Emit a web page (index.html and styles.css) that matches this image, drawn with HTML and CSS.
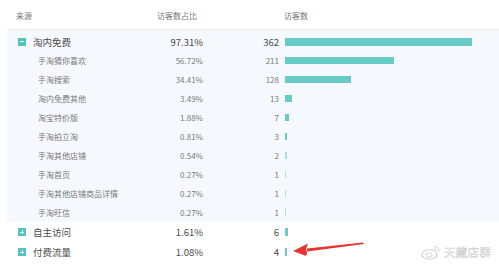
FILE: index.html
```html
<!DOCTYPE html>
<html lang="zh">
<head>
<meta charset="utf-8">
<link rel="stylesheet" href="styles.css">
</head>
<body>
<div class="table">
  <div class="row head">
    <div class="c-name">来源</div>
    <div class="c-pct">访客数占比</div>
    <div class="c-num"></div>
    <div class="c-bar">访客数</div>
  </div>
  <div class="band">
    <div class="row main">
      <div class="c-name"><span class="toggle minus"></span>淘内免费</div>
      <div class="c-pct">97.31%</div>
      <div class="c-num">362</div>
      <div class="c-bar"><span class="bar" style="width:187px"></span></div>
    </div>
    <div class="row sub">
      <div class="c-name">手淘猜你喜欢</div>
      <div class="c-pct">56.72%</div>
      <div class="c-num">211</div>
      <div class="c-bar"><span class="bar" style="width:109px"></span></div>
    </div>
    <div class="row sub">
      <div class="c-name">手淘搜索</div>
      <div class="c-pct">34.41%</div>
      <div class="c-num">128</div>
      <div class="c-bar"><span class="bar" style="width:66px"></span></div>
    </div>
    <div class="row sub">
      <div class="c-name">淘内免费其他</div>
      <div class="c-pct">3.49%</div>
      <div class="c-num">13</div>
      <div class="c-bar"><span class="bar" style="width:7px"></span></div>
    </div>
    <div class="row sub">
      <div class="c-name">淘宝特价版</div>
      <div class="c-pct">1.88%</div>
      <div class="c-num">7</div>
      <div class="c-bar"><span class="bar" style="width:4px"></span></div>
    </div>
    <div class="row sub">
      <div class="c-name">手淘拍立淘</div>
      <div class="c-pct">0.81%</div>
      <div class="c-num">3</div>
      <div class="c-bar"><span class="bar" style="width:2px"></span></div>
    </div>
    <div class="row sub">
      <div class="c-name">手淘其他店铺</div>
      <div class="c-pct">0.54%</div>
      <div class="c-num">2</div>
      <div class="c-bar"><span class="bar thin" style="width:1.5px"></span></div>
    </div>
    <div class="row sub">
      <div class="c-name">手淘首页</div>
      <div class="c-pct">0.27%</div>
      <div class="c-num">1</div>
      <div class="c-bar"><span class="bar thin" style="width:1px"></span></div>
    </div>
    <div class="row sub">
      <div class="c-name">手淘其他店铺商品详情</div>
      <div class="c-pct">0.27%</div>
      <div class="c-num">1</div>
      <div class="c-bar"><span class="bar thin" style="width:1px"></span></div>
    </div>
    <div class="row sub">
      <div class="c-name">手淘旺信</div>
      <div class="c-pct">0.27%</div>
      <div class="c-num">1</div>
      <div class="c-bar"><span class="bar thin" style="width:1px"></span></div>
    </div>
  </div>
  <div class="row main tall">
    <div class="c-name"><span class="toggle plus"></span>自主访问</div>
    <div class="c-pct">1.61%</div>
    <div class="c-num">6</div>
    <div class="c-bar"><span class="bar" style="width:3px"></span></div>
  </div>
  <div class="row main tall">
    <div class="c-name"><span class="toggle plus"></span>付费流量</div>
    <div class="c-pct">1.08%</div>
    <div class="c-num">4</div>
    <div class="c-bar"><span class="bar" style="width:2px"></span></div>
  </div>
</div>

<svg class="arrow" width="80" height="20" viewBox="0 0 80 20">
  <polygon points="72,1.5 73,3 16,10.5 16,7.5" fill="#e8332f"/>
  <polygon points="2,10 17,2.5 15,8 16,12 15,15" fill="#e8332f"/>
</svg>

<div class="watermark">
  <svg class="weibo" width="20" height="16" viewBox="0 0 20 16">
    <ellipse cx="8.5" cy="10.5" rx="7.5" ry="4.8" fill="none" stroke="#cfcfcf" stroke-width="1.1"/>
    <ellipse cx="8" cy="11" rx="3" ry="2.2" fill="none" stroke="#cfcfcf" stroke-width="0.9"/>
    <path d="M13 2.5 a4.5 4.5 0 0 1 5 5" fill="none" stroke="#cfcfcf" stroke-width="1"/>
    <path d="M13 5 a2 2 0 0 1 2.6 2.4" fill="none" stroke="#cfcfcf" stroke-width="0.9"/>
  </svg>
  <span class="wm-text">天藏店群</span>
</div>
</body>
</html>
```
FILE: styles.css
```css
html, body {
  margin: 0;
  padding: 0;
  background: #ffffff;
}

body {
  width: 499px;
  height: 264px;
  overflow: hidden;
  position: relative;
  font-family: "Noto Sans CJK SC", "Noto Sans", sans-serif;
  color: #555;
}

.table {
  margin-left: 7px;
}

.row {
  display: grid;
  grid-template-columns: 150px 46px 76px 1fr;
  align-items: center;
  height: 19px;
}

.row.tall {
  height: 20px;
}

.head {
  height: 28px;
  padding-top: 1px;
  border-bottom: 1px solid #ececec;
  font-size: 8px;
  color: #777;
}

.head .c-name {
  padding-left: 9px;
}

.head .c-pct {
  text-align: left;
}

.head .c-bar {
  padding-left: 5px;
}

.band {
  background: #f5f8fc;
  padding-top: 2px;
}

.c-name {
  display: flex;
  align-items: center;
  white-space: nowrap;
}

.c-pct,
.c-num {
  text-align: right;
}

.c-bar {
  display: flex;
  align-items: center;
  padding-left: 6px;
}

.main {
  font-size: 9.5px;
  color: #4a4a4a;
}

.main .c-name {
  padding-left: 11px;
  font-size: 9.5px;
}

.sub {
  font-size: 8px;
  color: #7a7a7a;
}

.sub .c-name {
  padding-left: 31px;
}

.toggle {
  width: 8px;
  height: 8px;
  background: #4fc3bd;
  margin-right: 7px;
  position: relative;
  flex: none;
}

.toggle::before {
  content: "";
  position: absolute;
  left: 2px;
  top: 3.5px;
  width: 4px;
  height: 1px;
  background: #fff;
}

.toggle.plus::after {
  content: "";
  position: absolute;
  left: 3.5px;
  top: 2px;
  width: 1px;
  height: 4px;
  background: #fff;
}

.bar {
  display: block;
  height: 7px;
  background: #68cbc5;
}

.main .bar {
  height: 8px;
}

.bar.thin {
  background: #a8e0dc;
}

.arrow {
  position: absolute;
  left: 291px;
  top: 241px;
}

.watermark {
  position: absolute;
  left: 421px;
  top: 244px;
  display: flex;
  align-items: center;
  gap: 3px;
}

.wm-text {
  font-size: 11.5px;
  color: #fafafa;
  -webkit-text-stroke: 0.45px #cccccc;
  letter-spacing: 0.3px;
}
```
